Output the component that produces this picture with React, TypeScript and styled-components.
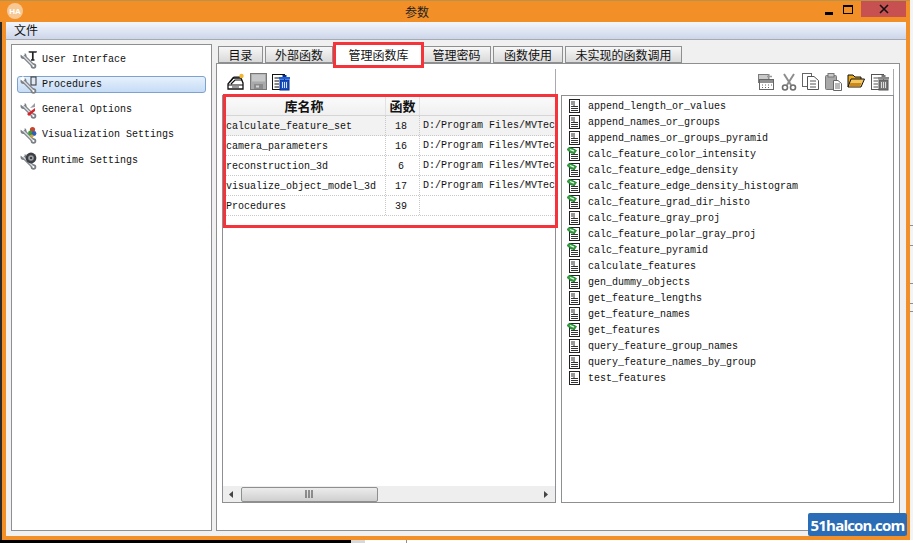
import * as React from "react"
import styled, { createGlobalStyle } from "styled-components"

const GlobalStyle = createGlobalStyle`
  html, body {
    margin: 0;
    padding: 0;
    background: #fff;
    overflow: hidden;
  }
`

const MONO = `"Liberation Mono", "DejaVu Sans Mono", monospace`
const CJK = `"Noto Sans CJK SC", "Liberation Sans", sans-serif`

const tabs = [
  { label: "目录", width: 45 },
  { label: "外部函数", width: 68 },
  { label: "管理函数库", width: 87, active: true },
  { label: "管理密码", width: 69 },
  { label: "函数使用", width: 70 },
  { label: "未实现的函数调用", width: 117 },
]

const settings = [
  { label: "User Interface", icon: "t" },
  { label: "Procedures", icon: "p", selected: true },
  { label: "General Options", icon: "g" },
  { label: "Visualization Settings", icon: "v" },
  { label: "Runtime Settings", icon: "r" },
]

const libraries = [
  { name: "calculate_feature_set", count: "18", path: "D:/Program Files/MVTec", hot: true },
  { name: "camera_parameters", count: "16", path: "D:/Program Files/MVTec" },
  { name: "reconstruction_3d", count: "6", path: "D:/Program Files/MVTec" },
  { name: "visualize_object_model_3d", count: "17", path: "D:/Program Files/MVTec" },
  { name: "Procedures", count: "39", path: "" },
]

const procedures = [
  { name: "append_length_or_values" },
  { name: "append_names_or_groups" },
  { name: "append_names_or_groups_pyramid" },
  { name: "calc_feature_color_intensity", tag: true },
  { name: "calc_feature_edge_density", tag: true },
  { name: "calc_feature_edge_density_histogram", tag: true },
  { name: "calc_feature_grad_dir_histo", tag: true },
  { name: "calc_feature_gray_proj" },
  { name: "calc_feature_polar_gray_proj", tag: true },
  { name: "calc_feature_pyramid", tag: true },
  { name: "calculate_features" },
  { name: "gen_dummy_objects", tag: true },
  { name: "get_feature_lengths" },
  { name: "get_feature_names" },
  { name: "get_features", tag: true },
  { name: "query_feature_group_names" },
  { name: "query_feature_names_by_group" },
  { name: "test_features" },
]

function WrenchIcon({ kind }: { kind: string }) {
  return (
    <svg width="18" height="18" viewBox="0 0 18 18">
      <circle cx="3.5" cy="5" r="3" fill="#7a7f85" />
      <circle cx="13.5" cy="15" r="2.8" fill="#7a7f85" />
      <path d="M3.5 5 L13.5 15" stroke="#7a7f85" strokeWidth="3.8" fill="none" />
      <path d="M3.5 5 L13.5 15" stroke="#d5d8dc" strokeWidth="1.6" fill="none" />
      <path d="M0 3 L3 5.5 L5 3 L3 0 Z" fill="#fff" />
      <circle cx="13.5" cy="15" r="1" fill="#fff" />
      {kind === "t" && <path d="M9.5 1.5 V1 H16 V1.5 M12.8 1 V9 M11 9 H14.5" stroke="#222" strokeWidth="1.7" fill="none" />}
      {kind === "p" && <rect x="11" y="1" width="5" height="8" fill="#dfe8f4" stroke="#333" strokeWidth="1" />}
      {kind === "g" && <path d="M7 13 L15 7 L15 10 L9 15 Z" fill="#d8232a" />}
      {kind === "g" && <path d="M10 7 L15 2 V6 Z" fill="#9a9da0" />}
      {kind === "v" && (
        <g>
          <circle cx="12.5" cy="3.5" r="2.6" fill="#c9442c" />
          <circle cx="10.5" cy="7" r="2.4" fill="#3f9a3c" />
          <circle cx="14" cy="7.5" r="2.4" fill="#2d5fb8" />
          <circle cx="12" cy="10" r="1.6" fill="#d8a526" />
        </g>
      )}
      {kind === "r" && (
        <g>
          <circle cx="11" cy="6" r="5.4" fill="#3c3f44" />
          <circle cx="11" cy="6" r="2.8" fill="#9a9da2" />
          <circle cx="11" cy="6" r="1" fill="#222" />
        </g>
      )}
    </svg>
  )
}

function DocIcon({ tag }: { tag?: boolean }) {
  return (
    <svg width="14" height="14" viewBox="0 0 14 14">
      <rect x="2.5" y="0.5" width="10" height="13" fill="#fff" stroke="#222" />
      <path d="M4 3 H6 M4 5 H6 M4 7.5 H11 M4 9.5 H11 M4 11.5 H11 M7 2 V7" stroke="#333" strokeWidth="1" fill="none" />
      {tag && (
        <g>
          <path d="M0 2.5 L2.5 0 L9.5 3.5 L7.5 6.5 L4 6 Z" fill="#2f9e3a" stroke="#13742a" strokeWidth="0.7" />
          <path d="M3 2.5 L7 4.2" stroke="#eaf8e8" strokeWidth="1.3" />
        </g>
      )}
    </svg>
  )
}

function OpenLibIcon() {
  return (
    <svg width="18" height="18" viewBox="0 0 18 18">
      <path d="M1 11 L6 5 H14 L16 10 V16 H1 Z" fill="#fff" stroke="#111" strokeWidth="1.3" />
      <path d="M3 9 L7 4 H14 M4 11 L8 7 H15 M1 12 H16" stroke="#111" strokeWidth="1.2" fill="none" />
      <path d="M5 14 H12" stroke="#555" strokeWidth="1.2" />
      <circle cx="14.5" cy="3" r="2.2" fill="#f2b632" />
    </svg>
  )
}

function SaveIcon() {
  return (
    <svg width="17" height="17" viewBox="0 0 17 17">
      <rect x="0.5" y="0.5" width="16" height="16" fill="#a9aaab" stroke="#777" />
      <rect x="2" y="1.5" width="13" height="7" fill="#c6c7c8" />
      <rect x="4" y="11" width="9" height="5" fill="#8a8b8c" />
      <rect x="6" y="12.5" width="3" height="2" fill="#d4d4d4" />
    </svg>
  )
}

function DeleteBlueIcon() {
  return (
    <svg width="18" height="18" viewBox="0 0 18 18">
      <rect x="0.5" y="1.5" width="12" height="15" fill="#fff" stroke="#111" />
      <path d="M2.5 5 H7 M2.5 8 H7 M2.5 11 H7 M2.5 14 H7" stroke="#111" strokeWidth="1.2" />
      <rect x="8" y="7" width="9" height="10" fill="#1550c8" stroke="#0b2f86" />
      <rect x="7" y="4" width="11" height="2.4" fill="#1a5fe0" />
      <rect x="10.5" y="2" width="4" height="2" fill="#0b2f86" />
      <path d="M10.5 9 V15 M12.5 9 V15 M14.5 9 V15" stroke="#cfe0ff" strokeWidth="1" />
    </svg>
  )
}

function NewIcon() {
  return (
    <svg width="18" height="18" viewBox="0 0 18 18">
      <rect x="1.5" y="1.5" width="10" height="8" fill="#c9c9c9" stroke="#7b7b7b" />
      <rect x="2.5" y="6.5" width="14" height="10" fill="#fff" stroke="#666" />
      <rect x="3" y="7" width="13" height="3" fill="#8f8f8f" />
      <path d="M5 12 H6 M8 12 H9 M11 12 H12 M14 12 H15 M5 14.5 H6 M8 14.5 H9 M11 14.5 H12" stroke="#666" />
      <path d="M12 1 V6 M10 3.5 H15" stroke="#9a9a9a" strokeWidth="1.3" />
    </svg>
  )
}

function CutIcon() {
  return (
    <svg width="16" height="18" viewBox="0 0 16 18">
      <path d="M3 1 L10 12 M13 1 L6 12" stroke="#8d8d8d" strokeWidth="2" fill="none" />
      <circle cx="4" cy="14.5" r="2.5" fill="#fff" stroke="#6e6e6e" strokeWidth="1.6" />
      <circle cx="12" cy="14.5" r="2.5" fill="#fff" stroke="#6e6e6e" strokeWidth="1.6" />
    </svg>
  )
}

function CopyIcon() {
  return (
    <svg width="17" height="17" viewBox="0 0 17 17">
      <rect x="0.5" y="0.5" width="9" height="13" fill="#fff" stroke="#666" />
      <path d="M5.5 3.5 H12 L16.5 7.5 V16.5 H5.5 Z" fill="#fff" stroke="#555" />
      <path d="M8 8 H14 M8 11 H14 M8 14 H14" stroke="#555" />
    </svg>
  )
}

function PasteIcon() {
  return (
    <svg width="17" height="18" viewBox="0 0 17 18">
      <rect x="0.5" y="2.5" width="11" height="14" rx="1" fill="#a8a8a8" stroke="#777" />
      <rect x="3" y="0.5" width="6" height="3.5" fill="#c8c8c8" stroke="#777" />
      <path d="M8.5 7.5 H13 L16.5 10.5 V17.5 H8.5 Z" fill="#fff" stroke="#666" />
      <path d="M10 11 H15 M10 13 H15 M10 15 H15" stroke="#777" />
    </svg>
  )
}

function FolderIcon() {
  return (
    <svg width="18" height="16" viewBox="0 0 18 16">
      <path d="M1 14 V2 H6 L8 4 H14 V6" fill="#e9a91b" stroke="#111" strokeWidth="1" />
      <path d="M1 14 L4 6 H17.5 L14 14 Z" fill="#f4c660" stroke="#111" strokeWidth="1" />
      <path d="M2 13.5 H13 L14.5 10 H3.5 Z" fill="#c98a1a" />
    </svg>
  )
}

function DeleteGrayIcon() {
  return (
    <svg width="18" height="18" viewBox="0 0 18 18">
      <rect x="0.5" y="1.5" width="12" height="15" fill="#fff" stroke="#555" />
      <path d="M2.5 5 H7 M2.5 8 H7 M2.5 11 H7 M2.5 14 H7" stroke="#555" strokeWidth="1.1" />
      <rect x="8" y="7" width="9" height="10" fill="#777" stroke="#555" />
      <rect x="7" y="4" width="11" height="2.4" fill="#888" />
      <rect x="10.5" y="2" width="4" height="2" fill="#777" />
      <path d="M10.5 9 V15 M12.5 9 V15 M14.5 9 V15" stroke="#ddd" />
    </svg>
  )
}

function Scrollbar() {
  return (
    <ScrollTrack>
      <svg width="18" height="15" viewBox="0 0 18 15">
        <path d="M10 4 L6 7.5 L10 11 Z" fill="#444" />
      </svg>
      <ScrollThumb>
        <svg width="9" height="8" viewBox="0 0 9 8">
          <path d="M1 0 V8 M4 0 V8 M7 0 V8" stroke="#555" strokeWidth="1.2" />
        </svg>
      </ScrollThumb>
      <ScrollSpacer />
      <svg width="18" height="15" viewBox="0 0 18 15">
        <path d="M7 4 L11 7.5 L7 11 Z" fill="#444" />
      </svg>
    </ScrollTrack>
  )
}

export default function App() {
  return (
    <Page>
      <GlobalStyle />
      <Window>
        <TitleBar>
          <Logo>HA</Logo>
          <Title>参数</Title>
          <WindowButtons>
            <MinButton />
            <MaxButton />
            <CloseButton>
              <svg width="12" height="10" viewBox="0 0 12 10">
                <path d="M2 1 L10 9 M10 1 L2 9" stroke="#111" strokeWidth="1.6" />
              </svg>
            </CloseButton>
          </WindowButtons>
        </TitleBar>
        <MenuBar>
          <MenuItem>文件</MenuItem>
        </MenuBar>
        <Body>
          <Sidebar>
            {settings.map((s) => (
              <SideRow key={s.label} $selected={s.selected}>
                <WrenchIcon kind={s.icon} />
                <SideLabel>{s.label}</SideLabel>
              </SideRow>
            ))}
          </Sidebar>
          <Main>
            <TabRow>
              {tabs.map((t) => (
                <Tab key={t.label} $width={t.width} $active={t.active}>
                  {t.label}
                </Tab>
              ))}
            </TabRow>
            <TabPanel>
              <Panes>
                <LeftPane>
                  <Toolbar>
                    <OpenLibIcon />
                    <SaveIcon />
                    <DeleteBlueIcon />
                  </Toolbar>
                  <TableBox>
                    <TableArea>
                      <HeaderRow>
                        <NameHead>库名称</NameHead>
                        <CountHead>函数</CountHead>
                        <PathHead />
                      </HeaderRow>
                      {libraries.map((l) => (
                        <LibRow key={l.name} $hot={l.hot}>
                          <NameCell>{l.name}</NameCell>
                          <CountCell>{l.count}</CountCell>
                          <PathCell>{l.path}</PathCell>
                        </LibRow>
                      ))}
                    </TableArea>
                    <Scrollbar />
                  </TableBox>
                </LeftPane>
                <RightPane>
                  <RightToolbar>
                    <NewIcon />
                    <CutIcon />
                    <CopyIcon />
                    <PasteIcon />
                    <FolderIcon />
                    <DeleteGrayIcon />
                  </RightToolbar>
                  <ProcList>
                    {procedures.map((p) => (
                      <ProcRow key={p.name}>
                        <DocIcon tag={p.tag} />
                        <ProcName>{p.name}</ProcName>
                      </ProcRow>
                    ))}
                  </ProcList>
                </RightPane>
              </Panes>
            </TabPanel>
          </Main>
        </Body>
        <EdgeShadow />
        <TabHighlight />
        <TableHighlight />
        <Watermark>51halcon.com</Watermark>
      </Window>
      <BackStrip />
      <BackTick />
      <SideStrip />
    </Page>
  )
}

const Page = styled.div`
  position: relative;
  width: 913px;
  height: 543px;
  overflow: hidden;
  background: #fff;
`

const BackStrip = styled.div`
  position: absolute;
  left: 0;
  top: 540px;
  width: 351px;
  height: 3px;
  background: #000;
`

const BackTick = styled.div`
  position: absolute;
  left: 351px;
  top: 540px;
  width: 55px;
  height: 3px;
  border-right: 1px solid #8e8f90;
  background: linear-gradient(90deg, #d8d8d8 0 14px, #fff 14px);
`

const SideStrip = styled.div`
  position: absolute;
  left: 910px;
  top: 0;
  width: 3px;
  height: 540px;
  background:
    linear-gradient(#8e8f90, #8e8f90) 0 225px / 100% 1px no-repeat,
    linear-gradient(#8e8f90, #8e8f90) 0 245px / 100% 1px no-repeat,
    linear-gradient(#8e8f90, #8e8f90) 0 283px / 100% 1px no-repeat,
    linear-gradient(#8e8f90, #8e8f90) 0 303px / 100% 1px no-repeat,
    linear-gradient(#8e8f90, #8e8f90) 0 311px / 100% 1px no-repeat,
    #f4f4f4;
`

const Window = styled.div`
  position: relative;
  box-sizing: border-box;
  width: 910px;
  height: 540px;
  background: #f28f26;
  border-top: 1px solid #b9934a;
  padding: 0 4px 4px 6px;
  display: flex;
  flex-direction: column;
`

const EdgeShadow = styled.div`
  position: absolute;
  left: 0;
  top: 21px;
  width: 2px;
  bottom: 0;
  background: #2a2a2a;
`

const TitleBar = styled.div`
  position: relative;
  height: 21px;
  flex: none;
  display: flex;
  align-items: center;
  justify-content: center;
`

const Logo = styled.div`
  position: absolute;
  left: 1px;
  top: 2px;
  width: 16px;
  height: 16px;
  border-radius: 50%;
  background: #f7c894;
  color: #fff;
  font: bold 8px "Liberation Sans", sans-serif;
  display: flex;
  align-items: center;
  justify-content: center;
`

const Title = styled.div`
  font: 12px ${CJK};
  color: #222;
  margin-right: 78px;
`

const WindowButtons = styled.div`
  position: absolute;
  right: 0;
  top: 0;
  display: flex;
  align-items: flex-start;
`

const MinButton = styled.div`
  width: 8px;
  height: 3px;
  margin: 11px 10px 0 0;
  background: #000;
`

const MaxButton = styled.div`
  box-sizing: border-box;
  width: 10px;
  height: 9px;
  margin: 4px 8px 0 0;
  border: 1px solid #000;
  border-top-width: 2px;
`

const CloseButton = styled.div`
  width: 45px;
  height: 16px;
  background: #c75050;
  display: flex;
  align-items: center;
  justify-content: center;
`

const MenuBar = styled.div`
  box-sizing: border-box;
  height: 18px;
  flex: none;
  padding: 0 0 2px 8px;
  background: linear-gradient(#f3f6fc, #ccd6ea);
  border-bottom: 1px solid #a9aab0;
  display: flex;
  align-items: center;
`

const MenuItem = styled.div`
  font: 12px ${CJK};
  color: #111;
`

const Body = styled.div`
  flex: 1;
  min-height: 0;
  background: #f0f0f0;
  display: flex;
  gap: 4px;
  padding: 4px 6px 5px 5px;
`

const Sidebar = styled.div`
  box-sizing: border-box;
  width: 201px;
  flex: none;
  background: #fff;
  border: 1px solid #8e8f90;
  padding: 6px 5px 0;
  display: flex;
  flex-direction: column;
  gap: 8px;
`

const SideRow = styled.div<{ $selected?: boolean }>`
  box-sizing: border-box;
  height: 17px;
  display: flex;
  align-items: center;
  gap: 4px;
  padding-left: 2px;
  border: 1px solid ${(p) => (p.$selected ? "#7da2ce" : "transparent")};
  border-radius: 3px;
  background: ${(p) => (p.$selected ? "linear-gradient(#e6f1fc, #c6dcf6)" : "transparent")};

  &:last-child {
    margin-top: 1px;
  }
`

const SideLabel = styled.span`
  font: 10px ${MONO};
  color: #111;
  white-space: pre;
`

const Main = styled.div`
  flex: 1;
  min-width: 0;
  display: flex;
  flex-direction: column;
`

const TabRow = styled.div`
  height: 19px;
  flex: none;
  padding-left: 2px;
  display: flex;
  align-items: flex-end;
  gap: 2px;
`

const Tab = styled.div<{ $width: number; $active?: boolean }>`
  box-sizing: border-box;
  width: ${(p) => p.$width}px;
  height: ${(p) => (p.$active ? 20 : 17)}px;
  margin-bottom: ${(p) => (p.$active ? -1 : 0)}px;
  margin-right: ${(p) => (p.$active ? -2 : 0)}px;
  padding-bottom: ${(p) => (p.$active ? 0 : 1)}px;
  font: 12px ${CJK};
  color: #111;
  display: flex;
  align-items: center;
  justify-content: center;
  border: 1px solid #8e8f90;
  border-bottom: ${(p) => (p.$active ? "none" : "1px solid #8e8f90")};
  background: ${(p) => (p.$active ? "#fff" : "linear-gradient(#f7f7f7, #d9d9d9)")};
  position: relative;
`

const TabPanel = styled.div`
  flex: 1;
  min-height: 0;
  box-sizing: border-box;
  background: #fff;
  border: 1px solid #8e8f90;
  padding: 5px 5px 27px;
`

const Panes = styled.div`
  height: 100%;
  display: flex;
  gap: 5px;
`

const LeftPane = styled.div`
  width: 334px;
  flex: none;
  display: flex;
  flex-direction: column;
`

const RightPane = styled.div`
  flex: 1;
  min-width: 0;
  display: flex;
  flex-direction: column;
`

const Toolbar = styled.div`
  height: 26px;
  flex: none;
  display: flex;
  align-items: flex-start;
  gap: 5px;
  padding: 4px 0 0 5px;
  box-sizing: border-box;
  border-right: 1px solid #a9aab0;
`

const RightToolbar = styled(Toolbar)`
  justify-content: flex-end;
  gap: 5.6px;
  padding-right: 4px;
`

const TableBox = styled.div`
  flex: 1;
  min-height: 0;
  box-sizing: border-box;
  border: 1px solid #8e8f90;
  display: flex;
  flex-direction: column;
`

const TableArea = styled.div`
  flex: 1;
  min-height: 0;
  overflow: hidden;
`

const HeaderRow = styled.div`
  height: 19px;
  display: flex;
  background: linear-gradient(#fbfbfb, #f0f0f0);
  border-bottom: 1px solid #d5d5d5;
`

const NameHead = styled.div`
  width: 163px;
  flex: none;
  box-sizing: border-box;
  border-right: 1px solid #e2e2e2;
  font: bold 13px ${CJK};
  color: #111;
  text-align: center;
  line-height: 19px;
`

const CountHead = styled.div`
  width: 34px;
  flex: none;
  box-sizing: border-box;
  border-right: 1px solid #e2e2e2;
  font: bold 13px ${CJK};
  color: #111;
  text-align: center;
  line-height: 19px;
`

const PathHead = styled.div`
  flex: 1;
`

const LibRow = styled.div<{ $hot?: boolean }>`
  box-sizing: border-box;
  height: 20px;
  display: flex;
  align-items: center;
  background: ${(p) => (p.$hot ? "#f2f2f2" : "#fff")};
  border-bottom: 1px dotted #c8c8c8;
  font: 10px ${MONO};
  color: #111;
  white-space: pre;
  overflow: hidden;
`

const NameCell = styled.div`
  box-sizing: border-box;
  width: 163px;
  height: 100%;
  flex: none;
  padding-left: 3px;
  line-height: 21px;
  border-right: 1px dotted #c8c8c8;
`

const CountCell = styled.div`
  box-sizing: border-box;
  width: 34px;
  height: 100%;
  flex: none;
  padding-right: 3px;
  text-align: center;
  line-height: 21px;
  border-right: 1px dotted #c8c8c8;
`

const PathCell = styled.div`
  padding-left: 3px;
  line-height: 21px;
`

const ScrollTrack = styled.div`
  height: 16px;
  flex: none;
  background: #eeeeee;
  display: flex;
  align-items: center;
`

const ScrollThumb = styled.div`
  box-sizing: border-box;
  width: 137px;
  height: 15px;
  border: 1px solid #8e8f90;
  border-radius: 2px;
  background: linear-gradient(#ececec, #cfcfcf);
  display: flex;
  align-items: center;
  justify-content: center;
`

const ScrollSpacer = styled.div`
  flex: 1;
`

const ProcList = styled.div`
  flex: 1;
  min-height: 0;
  box-sizing: border-box;
  border: 1px solid #8e8f90;
  padding-top: 2px;
  display: flex;
  flex-direction: column;
`

const ProcRow = styled.div`
  height: 16px;
  flex: none;
  display: flex;
  align-items: center;
  gap: 7px;
  padding-left: 5px;
`

const ProcName = styled.span`
  font: 10px ${MONO};
  color: #111;
  white-space: pre;
`

const TabHighlight = styled.div`
  position: absolute;
  left: 333px;
  top: 41px;
  width: 91px;
  height: 26px;
  box-sizing: border-box;
  border: 3px solid #f4333a;
  pointer-events: none;
`

const TableHighlight = styled.div`
  position: absolute;
  left: 223px;
  top: 93px;
  width: 335px;
  height: 134px;
  box-sizing: border-box;
  border: 3px solid #f4333a;
  pointer-events: none;
`

const Watermark = styled.div`
  position: absolute;
  left: 808px;
  top: 512px;
  width: 99px;
  height: 23px;
  background: #2a6cb5;
  color: #fff;
  font: bold 15px "Open Sans", "Liberation Sans", sans-serif;
  letter-spacing: -0.8px;
  display: flex;
  align-items: center;
  justify-content: center;
  white-space: nowrap;
  border-radius: 2px;
`
